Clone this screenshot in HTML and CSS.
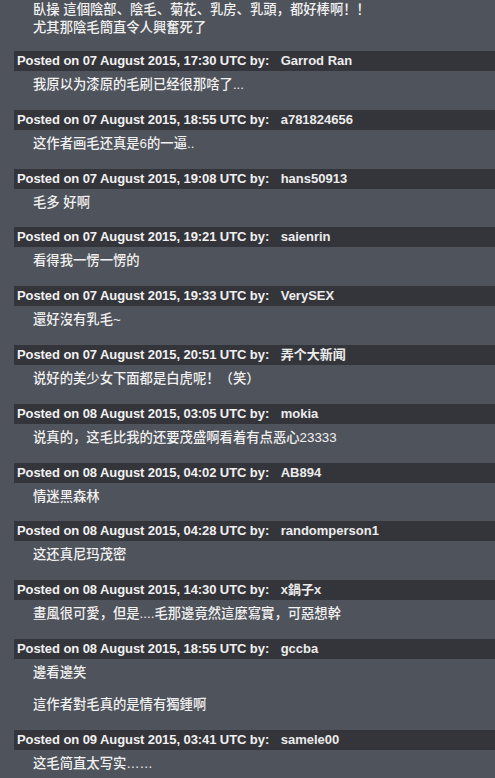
FILE: index.html
```html
<!DOCTYPE html>
<html lang="zh">
<head>
<meta charset="utf-8">
<title>Comments</title>
<link rel="stylesheet" href="styles.css">
</head>
<body>
<div class="comments">
  <div class="c-body c-first">臥操 這個陰部、陰毛、菊花、乳房、乳頭，都好棒啊！！<br>尤其那陰毛簡直令人興奮死了</div>

  <div class="c-head">Posted on 07 August 2015, 17:30 UTC by: <span class="c-user">Garrod Ran</span></div>
  <div class="c-body">我原以为漆原的毛刷已经很那啥了...</div>

  <div class="c-head">Posted on 07 August 2015, 18:55 UTC by: <span class="c-user">a781824656</span></div>
  <div class="c-body">这作者画毛还真是6的一逼..</div>

  <div class="c-head">Posted on 07 August 2015, 19:08 UTC by: <span class="c-user">hans50913</span></div>
  <div class="c-body">毛多 好啊</div>

  <div class="c-head">Posted on 07 August 2015, 19:21 UTC by: <span class="c-user">saienrin</span></div>
  <div class="c-body">看得我一愣一愣的</div>

  <div class="c-head">Posted on 07 August 2015, 19:33 UTC by: <span class="c-user">VerySEX</span></div>
  <div class="c-body">還好沒有乳毛~</div>

  <div class="c-head">Posted on 07 August 2015, 20:51 UTC by: <span class="c-user">弄个大新闻</span></div>
  <div class="c-body">说好的美少女下面都是白虎呢！（笑）</div>

  <div class="c-head">Posted on 08 August 2015, 03:05 UTC by: <span class="c-user">mokia</span></div>
  <div class="c-body">说真的，这毛比我的还要茂盛啊看着有点恶心23333</div>

  <div class="c-head">Posted on 08 August 2015, 04:02 UTC by: <span class="c-user">AB894</span></div>
  <div class="c-body">情迷黑森林</div>

  <div class="c-head">Posted on 08 August 2015, 04:28 UTC by: <span class="c-user">randomperson1</span></div>
  <div class="c-body">这还真尼玛茂密</div>

  <div class="c-head">Posted on 08 August 2015, 14:30 UTC by: <span class="c-user">x鍋子x</span></div>
  <div class="c-body">畫風很可愛，但是....毛那邊竟然這麼寫實，可惡想幹</div>

  <div class="c-head">Posted on 08 August 2015, 18:55 UTC by: <span class="c-user">gccba</span></div>
  <div class="c-body">邊看邊笑<br><br>這作者對毛真的是情有獨鍾啊</div>

  <div class="c-head">Posted on 09 August 2015, 03:41 UTC by: <span class="c-user">samele00</span></div>
  <div class="c-body">这毛简直太写实……</div>
</div>
</body>
</html>
```
FILE: styles.css
```css
html, body {
  margin: 0;
  padding: 0;
  background: #4f535b;
}
body {
  color: #f1f1f1;
  font-family: "Liberation Sans", Arial, "Noto Sans CJK SC", sans-serif;
  overflow: hidden;
}
.comments {
  padding-left: 14px;
}
.c-head {
  background: #34353b;
  height: 20px;
  line-height: 20px;
  padding-left: 3px;
  font-size: 13px;
  font-weight: bold;
  letter-spacing: -0.08px;
  white-space: nowrap;
}
.c-user {
  margin-left: 8px;
  font-weight: bold;
  letter-spacing: 0;
  color: #ececec;
}
.c-body {
  padding: 6px 0 16.8px 19px;
  font-size: 13.33px;
  line-height: 16px;
  font-weight: 500;
}
.c-first {
  padding-top: 1px;
  padding-bottom: 14px;
  line-height: 18px;
}
```
